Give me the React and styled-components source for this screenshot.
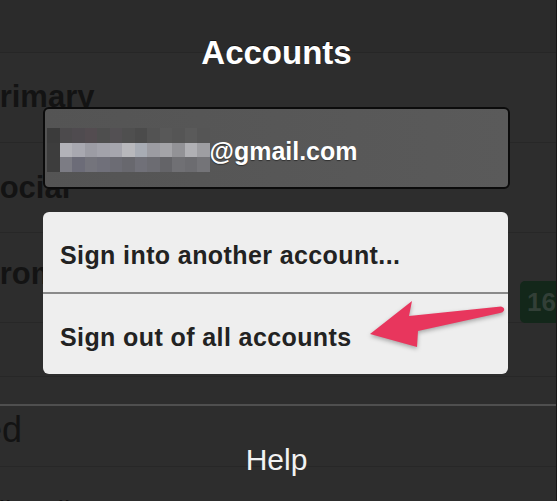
import React from "react";
import styled, { createGlobalStyle } from "styled-components";

const GlobalStyle = createGlobalStyle`
  html, body {
    margin: 0;
    padding: 0;
    background: #2d2d2d;
  }
  body {
    font-family: "Liberation Sans", Arial, Helvetica, sans-serif;
  }
`;

const Screen = styled.div`
  position: relative;
  width: 557px;
  height: 501px;
  overflow: hidden;
  background: #2d2d2d;
  border-right: 1px solid #161616;
  box-sizing: border-box;
`;

/* the inbox list that sits dimmed behind the sheet */
const Inbox = styled.div`
  display: flex;
  flex-direction: column;
`;

const ListHeader = styled.div`
  height: 53px;
  background: #2b2b2b;
  border-bottom: 1px solid #262626;
  box-sizing: border-box;
`;

const Row = styled.div`
  display: flex;
  align-items: flex-start;
  justify-content: space-between;
  height: ${(p) => p.h}px;
  border-bottom: 1px solid ${(p) => (p.bright ? "#4f4f4f" : "#272727")};
  border-bottom-width: ${(p) => (p.bright ? 2 : 1)}px;
  box-sizing: border-box;
  padding-top: ${(p) => p.pt || 0}px;
`;

const Label = styled.span`
  font-size: ${(p) => p.size || 31}px;
  font-weight: ${(p) => (p.light ? 400 : 700)};
  line-height: 1;
  color: #131313;
  margin-left: ${(p) => p.offset}px;
  white-space: nowrap;
`;

const Badge = styled.span`
  display: flex;
  align-items: center;
  height: 42px;
  margin-top: 23px;
  padding: 0 14px 0 7px;
  margin-right: -14px;
  background: #13271a;
  border-radius: 5px;
  color: #323f37;
  font-size: 26px;
  font-weight: 700;
`;

/* the accounts sheet */
const Sheet = styled.div`
  position: absolute;
  inset: 0;
  display: flex;
  flex-direction: column;
  padding-top: 36px;
  box-sizing: border-box;
`;

const Title = styled.h1`
  margin: 0;
  width: 553px;
  text-align: center;
  font-size: 33px;
  line-height: 33px;
  font-weight: 700;
  color: #ffffff;
  text-shadow: 0 -1px 0 rgba(0, 0, 0, 0.5);
`;

const Content = styled.div`
  display: flex;
  flex-direction: column;
  padding-left: 43px;
  margin-top: 38px;
`;

const AccountBox = styled.div`
  display: flex;
  align-items: center;
  width: 467px;
  height: 82px;
  box-sizing: border-box;
  border: 2px solid #0b0b0b;
  border-radius: 6px;
  background: linear-gradient(90deg, #545454, #5a5a5a);
  padding: 4px 0 0 2px;
`;

const Pixelated = styled.div`
  display: grid;
  grid-template-columns: repeat(13, 12.5px);
  grid-template-rows: 15px 14px 15px;
`;

const Cell = styled.span`
  background: ${(p) => p.c};
`;

const Email = styled.span`
  font-size: 25px;
  font-weight: 700;
  line-height: 25px;
  color: #ffffff;
  padding-top: 3px;
  text-shadow: 0 1px 1px rgba(0, 0, 0, 0.45);
`;

const Menu = styled.div`
  display: flex;
  flex-direction: column;
  width: 465px;
  margin-top: 23px;
  background: #eeeeee;
  border-radius: 6px;
  overflow: hidden;
`;

const MenuItem = styled.div`
  display: flex;
  align-items: center;
  box-sizing: border-box;
  padding: 6px 0 0 17px;
  font-size: 25px;
  line-height: 25px;
  font-weight: 700;
  letter-spacing: 0.4px;
  color: #222222;
  border-top: ${(p) => (p.divided ? "2px solid #8a8a8a" : "none")};
  height: ${(p) => (p.divided ? 82 : 80)}px;
`;

const Footer = styled.div`
  margin-top: auto;
  height: 95px;
  padding-top: 39px;
  box-sizing: border-box;
  width: 553px;
  text-align: center;
`;

const Help = styled.span`
  font-size: 30px;
  line-height: 30px;
  color: #f2f2f2;
`;

const ArrowLayer = styled.svg`
  position: absolute;
  left: 0;
  top: 0;
  pointer-events: none;
  filter: drop-shadow(0 2px 2px rgba(0, 0, 0, 0.3));
`;

const pixelRows = [
  ["#3b3b3b", "#4c4a4c", "#4f4b4f", "#534c50", "#4e4e4e", "#535053", "#4f4f4f", "#4b4b4b", "#535353", "#585858", "#555555", "#5a5a5a", "#555555"],
  ["#3d3d3d", "#b2b2b8", "#a8a8b0", "#9c9ca4", "#a2a2aa", "#a6a6ae", "#b8b8bc", "#a8acb4", "#9c9ca2", "#a4a4a8", "#929296", "#b0b0b4", "#9e9ea2"],
  ["#3d3d3d", "#7c7c84", "#6c6c78", "#74747c", "#70707a", "#6c6c74", "#68686e", "#707078", "#6c6c72", "#646468", "#707074", "#6c6c70", "#747478"],
];

const App = () => {
  return (
    <Screen>
      <GlobalStyle />
      <Inbox>
        <ListHeader />
        <Row h={90} pt={28}>
          <Label offset={-21}>Primary</Label>
        </Row>
        <Row h={90} pt={29}>
          <Label offset={-21}>Social</Label>
        </Row>
        <Row h={90} pt={25}>
          <Label offset={-21}>Promotions</Label>
          <Badge>16</Badge>
        </Row>
        <Row h={54} />
        <Row h={29} bright />
        <Row h={61} pt={6}>
          <Label offset={-96} size={36} light>
            Starred
          </Label>
        </Row>
        <Row h={40} pt={30}>
          <Label offset={-20} size={28} light>
            All Mail
          </Label>
        </Row>
      </Inbox>

      <Sheet>
        <Title>Accounts</Title>
        <Content>
          <AccountBox>
            <Pixelated>
              {pixelRows.flat().map((c, i) => (
                <Cell key={i} c={c} />
              ))}
            </Pixelated>
            <Email>@gmail.com</Email>
          </AccountBox>
          <Menu>
            <MenuItem>Sign into another account...</MenuItem>
            <MenuItem divided>Sign out of all accounts</MenuItem>
          </Menu>
        </Content>
        <Footer>
          <Help>Help</Help>
        </Footer>
      </Sheet>

      <ArrowLayer width="557" height="501" viewBox="0 0 557 501">
        <path
          d="M370 334 L412 301 L409 316 L501 306.5 Q505 307.5 504 310.5 Q503 312.5 500 313 L418 331 L417 347 Z"
          fill="#e8365d"
        />
      </ArrowLayer>
    </Screen>
  );
};

export default App;
